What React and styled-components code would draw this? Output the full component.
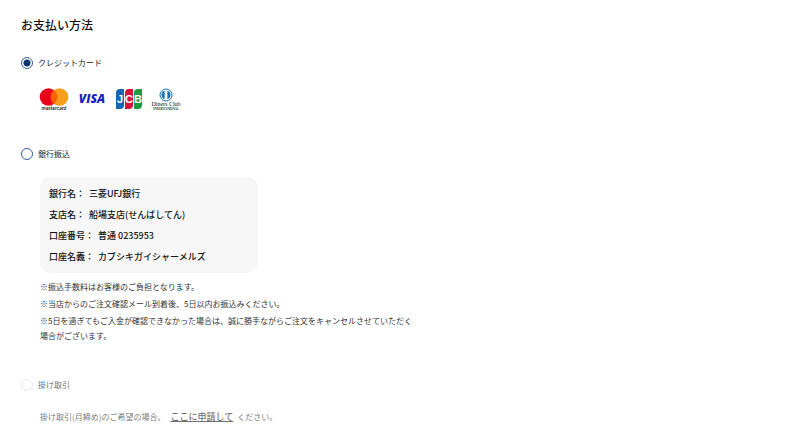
import React, { useState } from 'react';
import styled, { createGlobalStyle } from 'styled-components';

const GlobalStyle = createGlobalStyle`
  * {
    box-sizing: border-box;
  }
  body {
    margin: 0;
    background: #fff;
    color: #111;
    font-family: "Noto Sans CJK JP", "Noto Sans", sans-serif;
  }
`;
const Page = styled.main`
  padding: 16px 20px;
`;
const Title = styled.h1`
  margin: 0 0 22px 1px;
  font-size: 12px;
  line-height: 18px;
  font-weight: 500;
`;
const Method = styled.section`
  margin-bottom: ${props => props.$gap || 0};
  opacity: ${props => props.$faded ? 0.65 : 1};
`;
const Option = styled.label`
  display: flex;
  align-items: center;
  gap: 5px;
  font-size: 8px;
  line-height: 14px;
  color: #222;
`;
const Radio = styled.input`
  appearance: none;
  width: 12px;
  height: 12px;
  margin: 0 0 0 1px;
  border: 1px solid #34609a;
  border-radius: 50%;
  background: #fff;
  &:checked {
    background: radial-gradient(circle, #0a3570 3px, #fff 4px);
  }
  &:disabled {
    border-color: #ddd;
  }
`;
const Cards = styled.div`
  display: flex;
  align-items: center;
  gap: 8px;
  padding: 16px 0 0 19px;
`;
const Details = styled.div`
  padding: ${props => props.$top || '16px'} 0 0 20px;
`;
const Bank = styled.dl`
  width: 218px;
  max-width: 100%;
  margin: 0 0 6px;
  padding: 6px 9px;
  border-radius: 10px;
  background: #f7f7f7;
  font-size: 9px;
  line-height: 21px;
  font-weight: 500;
`;
const BankRow = styled.div`
  display: flex;
  gap: 4px;
`;
const Term = styled.dt`
  margin: 0;
`;
const Value = styled.dd`
  margin: 0;
`;
const Note = styled.p`
  max-width: 376px;
  margin: 0 0 2px;
  font-size: 8px;
  line-height: 15px;
  color: #333;
`;
const ApplyLink = styled.a`
  margin: 0 4px 0 5px;
  font-size: 9px;
  font-weight: 500;
  color: #222;
`;

const banks = [
  ['銀行名：', '三菱UFJ銀行'],
  ['支店名：', '船場支店(せんばしてん)'],
  ['口座番号：', '普通 0235953'],
  ['口座名義：', 'カブシキガイシャーメルズ'],
];

const Mastercard = () => (
  <svg width="30" height="26" viewBox="0 0 30 26" role="img" aria-label="mastercard">
    <circle cx="9.5" cy="11" r="8.8" fill="#eb001b" />
    <circle cx="20.5" cy="11" r="8.8" fill="#f79e1b" />
    <path d="M15 4.1a8.8 8.8 0 0 1 0 13.8a8.8 8.8 0 0 1 0-13.8z" fill="#ff5f00" />
    <text x="15" y="24" textAnchor="middle" fontFamily="Lato, sans-serif" fontSize="5" fontWeight="700" fill="#222">mastercard</text>
  </svg>
);
const Visa = () => (
  <svg width="30" height="26" viewBox="0 0 30 26" role="img" aria-label="VISA">
    <text x="15" y="17" textAnchor="middle" fontFamily="Open Sans, sans-serif" fontSize="12" fontStyle="italic" fontWeight="800" fill="#1a1fc0">VISA</text>
  </svg>
);
const Jcb = () => (
  <svg width="28" height="26" viewBox="0 0 28 26" role="img" aria-label="JCB">
    <path d="M5 3h4v16q0 4-4 4H1V7q0-4 4-4z" fill="#1467b3" />
    <path d="M14 3h4v16q0 4-4 4h-4V7q0-4 4-4z" fill="#d5143c" />
    <path d="M23 3h4v16q0 4-4 4h-4V7q0-4 4-4z" fill="#1c9c3c" />
    <g fontFamily="Liberation Sans, sans-serif" fontSize="11" fontWeight="700" fill="#fff" textAnchor="middle">
      <text x="5" y="17">J</text>
      <text x="14" y="17">C</text>
      <text x="23" y="17">B</text>
    </g>
  </svg>
);
const Diners = () => (
  <svg width="30" height="26" viewBox="0 0 30 26" role="img" aria-label="Diners Club International">
    <circle cx="15" cy="9" r="6" fill="#fff" stroke="#1470b4" />
    <path d="M13.6 4.8a4.4 4.4 0 0 0 0 8.4zM16.4 4.8a4.4 4.4 0 0 1 0 8.4z" fill="#1470b4" />
    <text x="15" y="20" textAnchor="middle" fontFamily="Liberation Serif, serif" fontSize="6" fill="#111">Diners Club</text>
    <text x="15" y="24" textAnchor="middle" fontFamily="Liberation Serif, serif" fontSize="3" fontWeight="700" fill="#222">INTERNATIONAL</text>
  </svg>
);

function App() {
  const [method, setMethod] = useState('card');
  const radio = (value, disabled) => (
    <Radio
      type="radio"
      name="payment"
      value={value}
      checked={method === value}
      disabled={disabled}
      onChange={() => setMethod(value)}
    />
  );

  return (
    <>
      <GlobalStyle />
      <Page>
        <Title>お支払い方法</Title>
        <Method $gap="35px">
          <Option>{radio('card')}クレジットカード</Option>
          <Cards>
            <Mastercard />
            <Visa />
            <Jcb />
            <Diners />
          </Cards>
        </Method>
        <Method $gap="35px">
          <Option>{radio('bank')}銀行振込</Option>
          <Details>
            <Bank>
              {banks.map(([term, value]) => (
                <BankRow key={term}>
                  <Term>{term}</Term>
                  <Value>{value}</Value>
                </BankRow>
              ))}
            </Bank>
            <Note>※振込手数料はお客様のご負担となります。</Note>
            <Note>※当店からのご注文確認メール到着後、5日以内お振込みください。</Note>
            <Note>※5日を過ぎてもご入金が確認できなかった場合は、誠に勝手ながらご注文をキャンセルさせていただく場合がございます。</Note>
          </Details>
        </Method>
        <Method $faded>
          <Option>{radio('credit', true)}掛け取引</Option>
          <Details $top="17px">
            <Note>
              掛け取引(月締め)のご希望の場合、
              <ApplyLink href="#apply">ここに申請して</ApplyLink>
              ください。
            </Note>
          </Details>
        </Method>
      </Page>
    </>
  );
}

export default App;
